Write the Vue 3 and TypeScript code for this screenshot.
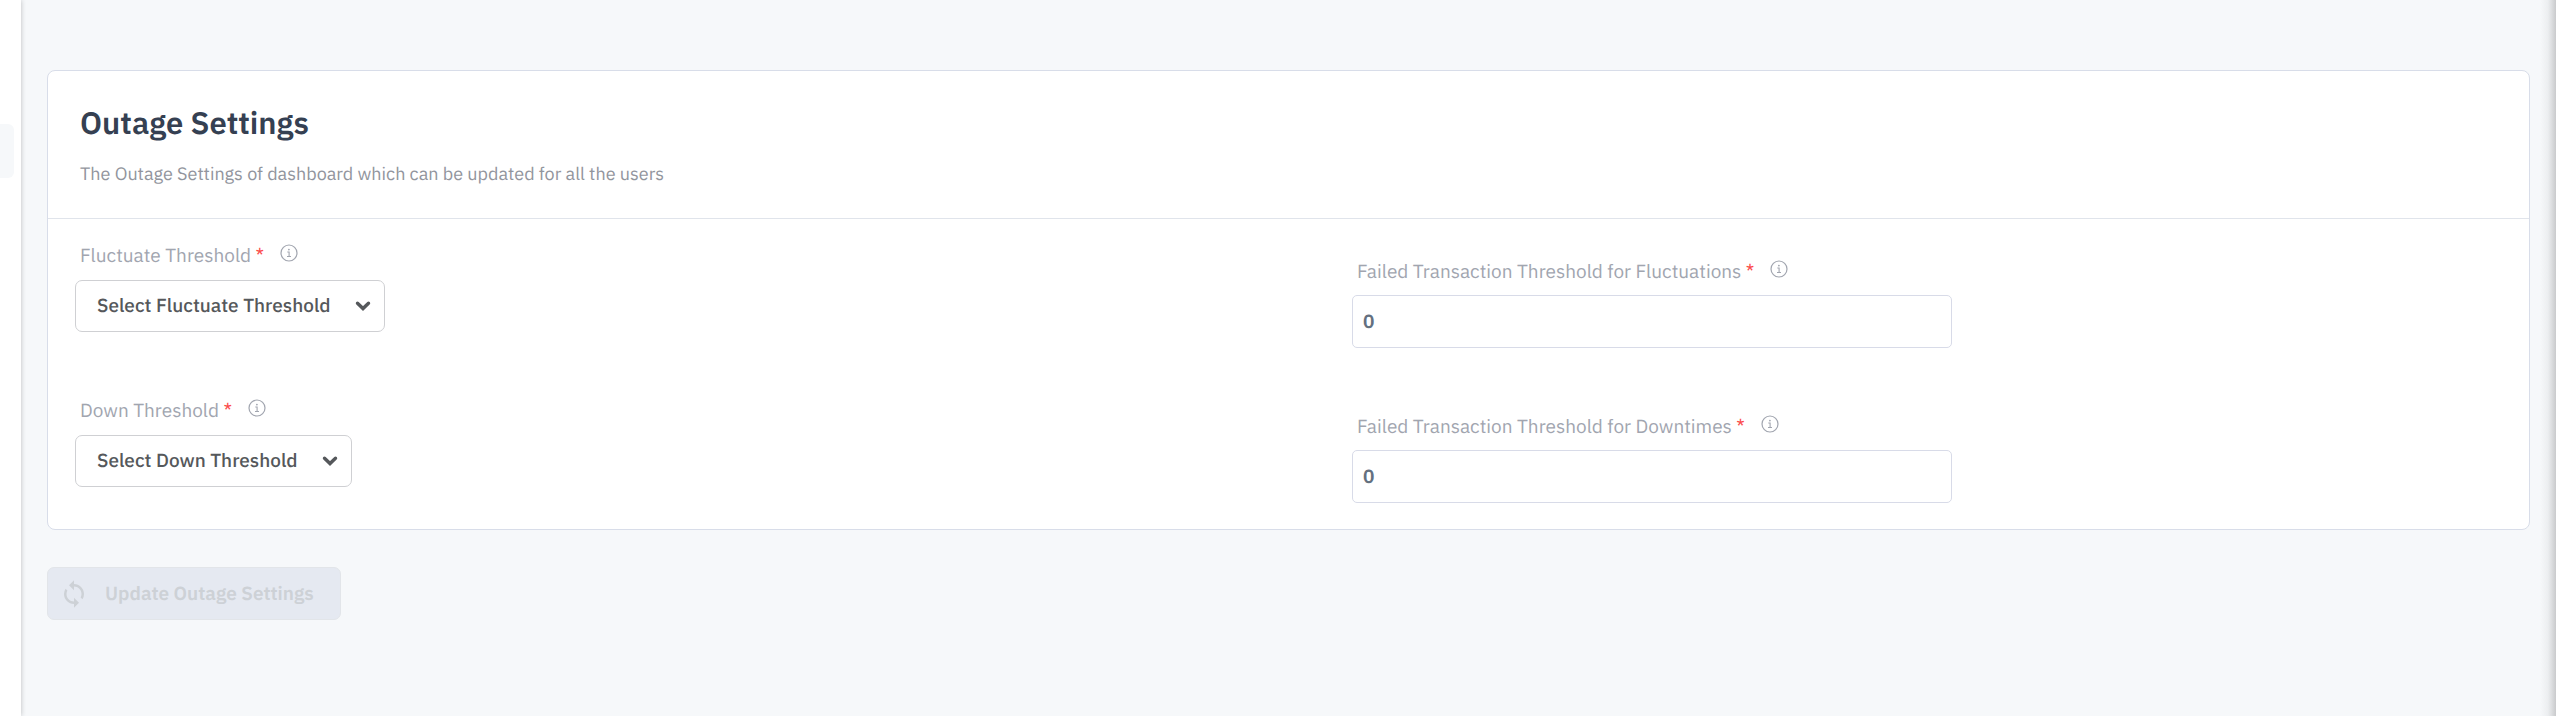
<script setup lang="ts">
import { reactive } from 'vue'

interface Field {
  id: string
  label: string
  kind: 'select' | 'number'
  placeholder?: string
}

const fields: Field[] = [
  { id: 'fluctuate', label: 'Fluctuate Threshold', kind: 'select', placeholder: 'Select Fluctuate Threshold' },
  { id: 'failed-fluctuations', label: 'Failed Transaction Threshold for Fluctuations', kind: 'number' },
  { id: 'down', label: 'Down Threshold', kind: 'select', placeholder: 'Select Down Threshold' },
  { id: 'failed-downtimes', label: 'Failed Transaction Threshold for Downtimes', kind: 'number' },
]

const values = reactive<Record<string, string>>({
  fluctuate: '',
  'failed-fluctuations': '0',
  down: '',
  'failed-downtimes': '0',
})
</script>

<template>
  <div class="layout">
    <aside class="sidebar"><div class="sidebar-item"></div></aside>
    <main class="content">
      <form @submit.prevent>
        <section class="card">
          <header class="card-header">
            <h1>Outage Settings</h1>
            <p>The Outage Settings of dashboard which can be updated for all the users</p>
          </header>
          <div class="fields">
            <div v-for="field in fields" :key="field.id" class="field" :class="field.kind">
              <div class="label-row">
                <label :for="field.id">{{ field.label }} <span class="required">*</span></label>
                <svg class="info" viewBox="0 0 18 18" aria-hidden="true">
                  <circle cx="9" cy="9" r="8" fill="none" stroke="currentColor" stroke-width="1.2" />
                  <circle cx="8.9" cy="5.6" r="0.9" fill="currentColor" />
                  <path d="M7.3 8h1.8v4.4M7 12.5h4" fill="none" stroke="currentColor" stroke-width="1.1" />
                </svg>
              </div>
              <div v-if="field.kind === 'select'" class="select-box">
                <select :id="field.id" v-model="values[field.id]">
                  <option value="">{{ field.placeholder }}</option>
                </select>
                <svg class="chevron" viewBox="0 0 14 10" aria-hidden="true">
                  <path d="M2.200 2.600 7 7.200l4.800-4.600" fill="none" stroke="currentColor" stroke-width="3" stroke-linecap="round" />
                </svg>
              </div>
              <input v-else :id="field.id" v-model="values[field.id]" type="text" inputmode="numeric" />
            </div>
          </div>
        </section>
        <button class="update" type="submit" disabled>
          <svg viewBox="0 0 24 24" aria-hidden="true">
            <path fill="currentColor" d="M12 4V1L8 5l4 4V6c3.310 0 6 2.690 6 6 0 1.010-.25 1.970-.7 2.800l1.460 1.460A7.930 7.930 0 0 0 20 12c0-4.420-3.580-8-8-8zm0 14c-3.310 0-6-2.690-6-6 0-1.010.25-1.970.7-2.800L5.240 7.740A7.930 7.930 0 0 0 4 12c0 4.420 3.580 8 8 8v3l4-4-4-4v3z" />
          </svg>
          <span>Update Outage Settings</span>
        </button>
      </form>
    </main>
    <div class="edge"></div>
  </div>
</template>

<style>
body {
  margin: 0;
  background: #f6f8fa;
}
</style>

<style scoped>
* {
  box-sizing: border-box;
}

.layout {
  display: flex;
  min-height: 100vh;
  background: #f6f8fa;
  font-family: "IBM Plex Sans", Roboto, "Noto Sans", sans-serif;
  font-size: 19px;
  line-height: 24px;
  text-rendering: geometricPrecision;
}

.sidebar {
  flex: none;
  width: 21px;
  padding-top: 124px;
  background: #fff;
  box-shadow: 0 0 5px rgba(0, 0, 0, 0.24);
}

.sidebar-item {
  width: 14px;
  height: 54px;
  border-radius: 0 6px 6px 0;
  background: #f6f8fa;
}

.content {
  flex: 1;
  min-width: 0;
  padding: 70px 10px 40px 26px;
}

.edge {
  flex: none;
  width: 16px;
  background: linear-gradient(to right, #f6f8fa, #eceef0 50%, #c9cacc);
}

.card {
  border: 1px solid #d8dde9;
  border-radius: 8px;
  background: #fff;
}

.card-header {
  padding: 32px 32px 31px;
  border-bottom: 1px solid #e0e4eb;
}

h1 {
  margin: 0 0 18px;
  font-size: 31px;
  line-height: 40px;
  font-weight: 600;
  color: #354052;
}

p {
  margin: 0;
  font-size: 18px;
  line-height: 26px;
  color: #92959d;
}

.fields {
  display: grid;
  grid-template-columns: repeat(2, minmax(0, 1fr));
  column-gap: 100px;
  padding: 25px 0 26px 27px;
}

.field {
  height: 155px;
}

.field:nth-child(n + 3) {
  height: auto;
}

.field.number {
  padding-top: 16px;
}

.label-row {
  display: flex;
  align-items: center;
  gap: 16px;
  height: 24px;
  margin: 0 0 12px 5px;
  color: #a1a5af;
}

.number .label-row {
  margin-bottom: 11px;
}

.required {
  color: #fb4b4b;
}

.info {
  width: 18px;
  height: 18px;
  margin-bottom: 6px;
}

.select-box {
  display: inline-grid;
  align-items: center;
  color: #55585b;
}

.select-box > * {
  grid-area: 1 / 1;
}

select {
  appearance: none;
  height: 52px;
  padding: 0 53px 0 21px;
  border: 1px solid #cfd0d3;
  border-radius: 7px;
  background: #fff;
  font: inherit;
  font-weight: 500;
  text-rendering: inherit;
  color: inherit;
}

.chevron {
  justify-self: end;
  width: 16px;
  height: 12px;
  margin-right: 14px;
  pointer-events: none;
}

input {
  display: block;
  width: 100%;
  max-width: 600px;
  height: 53px;
  padding: 0 10px;
  border: 1px solid #d8dbe8;
  border-radius: 5px;
  background: #fff;
  font: inherit;
  font-weight: 600;
  text-rendering: inherit;
  color: #647080;
}

.update {
  display: flex;
  align-items: center;
  gap: 16px;
  height: 53px;
  margin-top: 37px;
  padding: 0 26px 0 11px;
  border: 1px solid #e2e5e9;
  border-radius: 7px;
  background: #e5e9f1;
  font: inherit;
  font-weight: 600;
  text-rendering: inherit;
  color: #cdd1d6;
}

.update svg {
  width: 30px;
  height: 30px;
}
</style>
